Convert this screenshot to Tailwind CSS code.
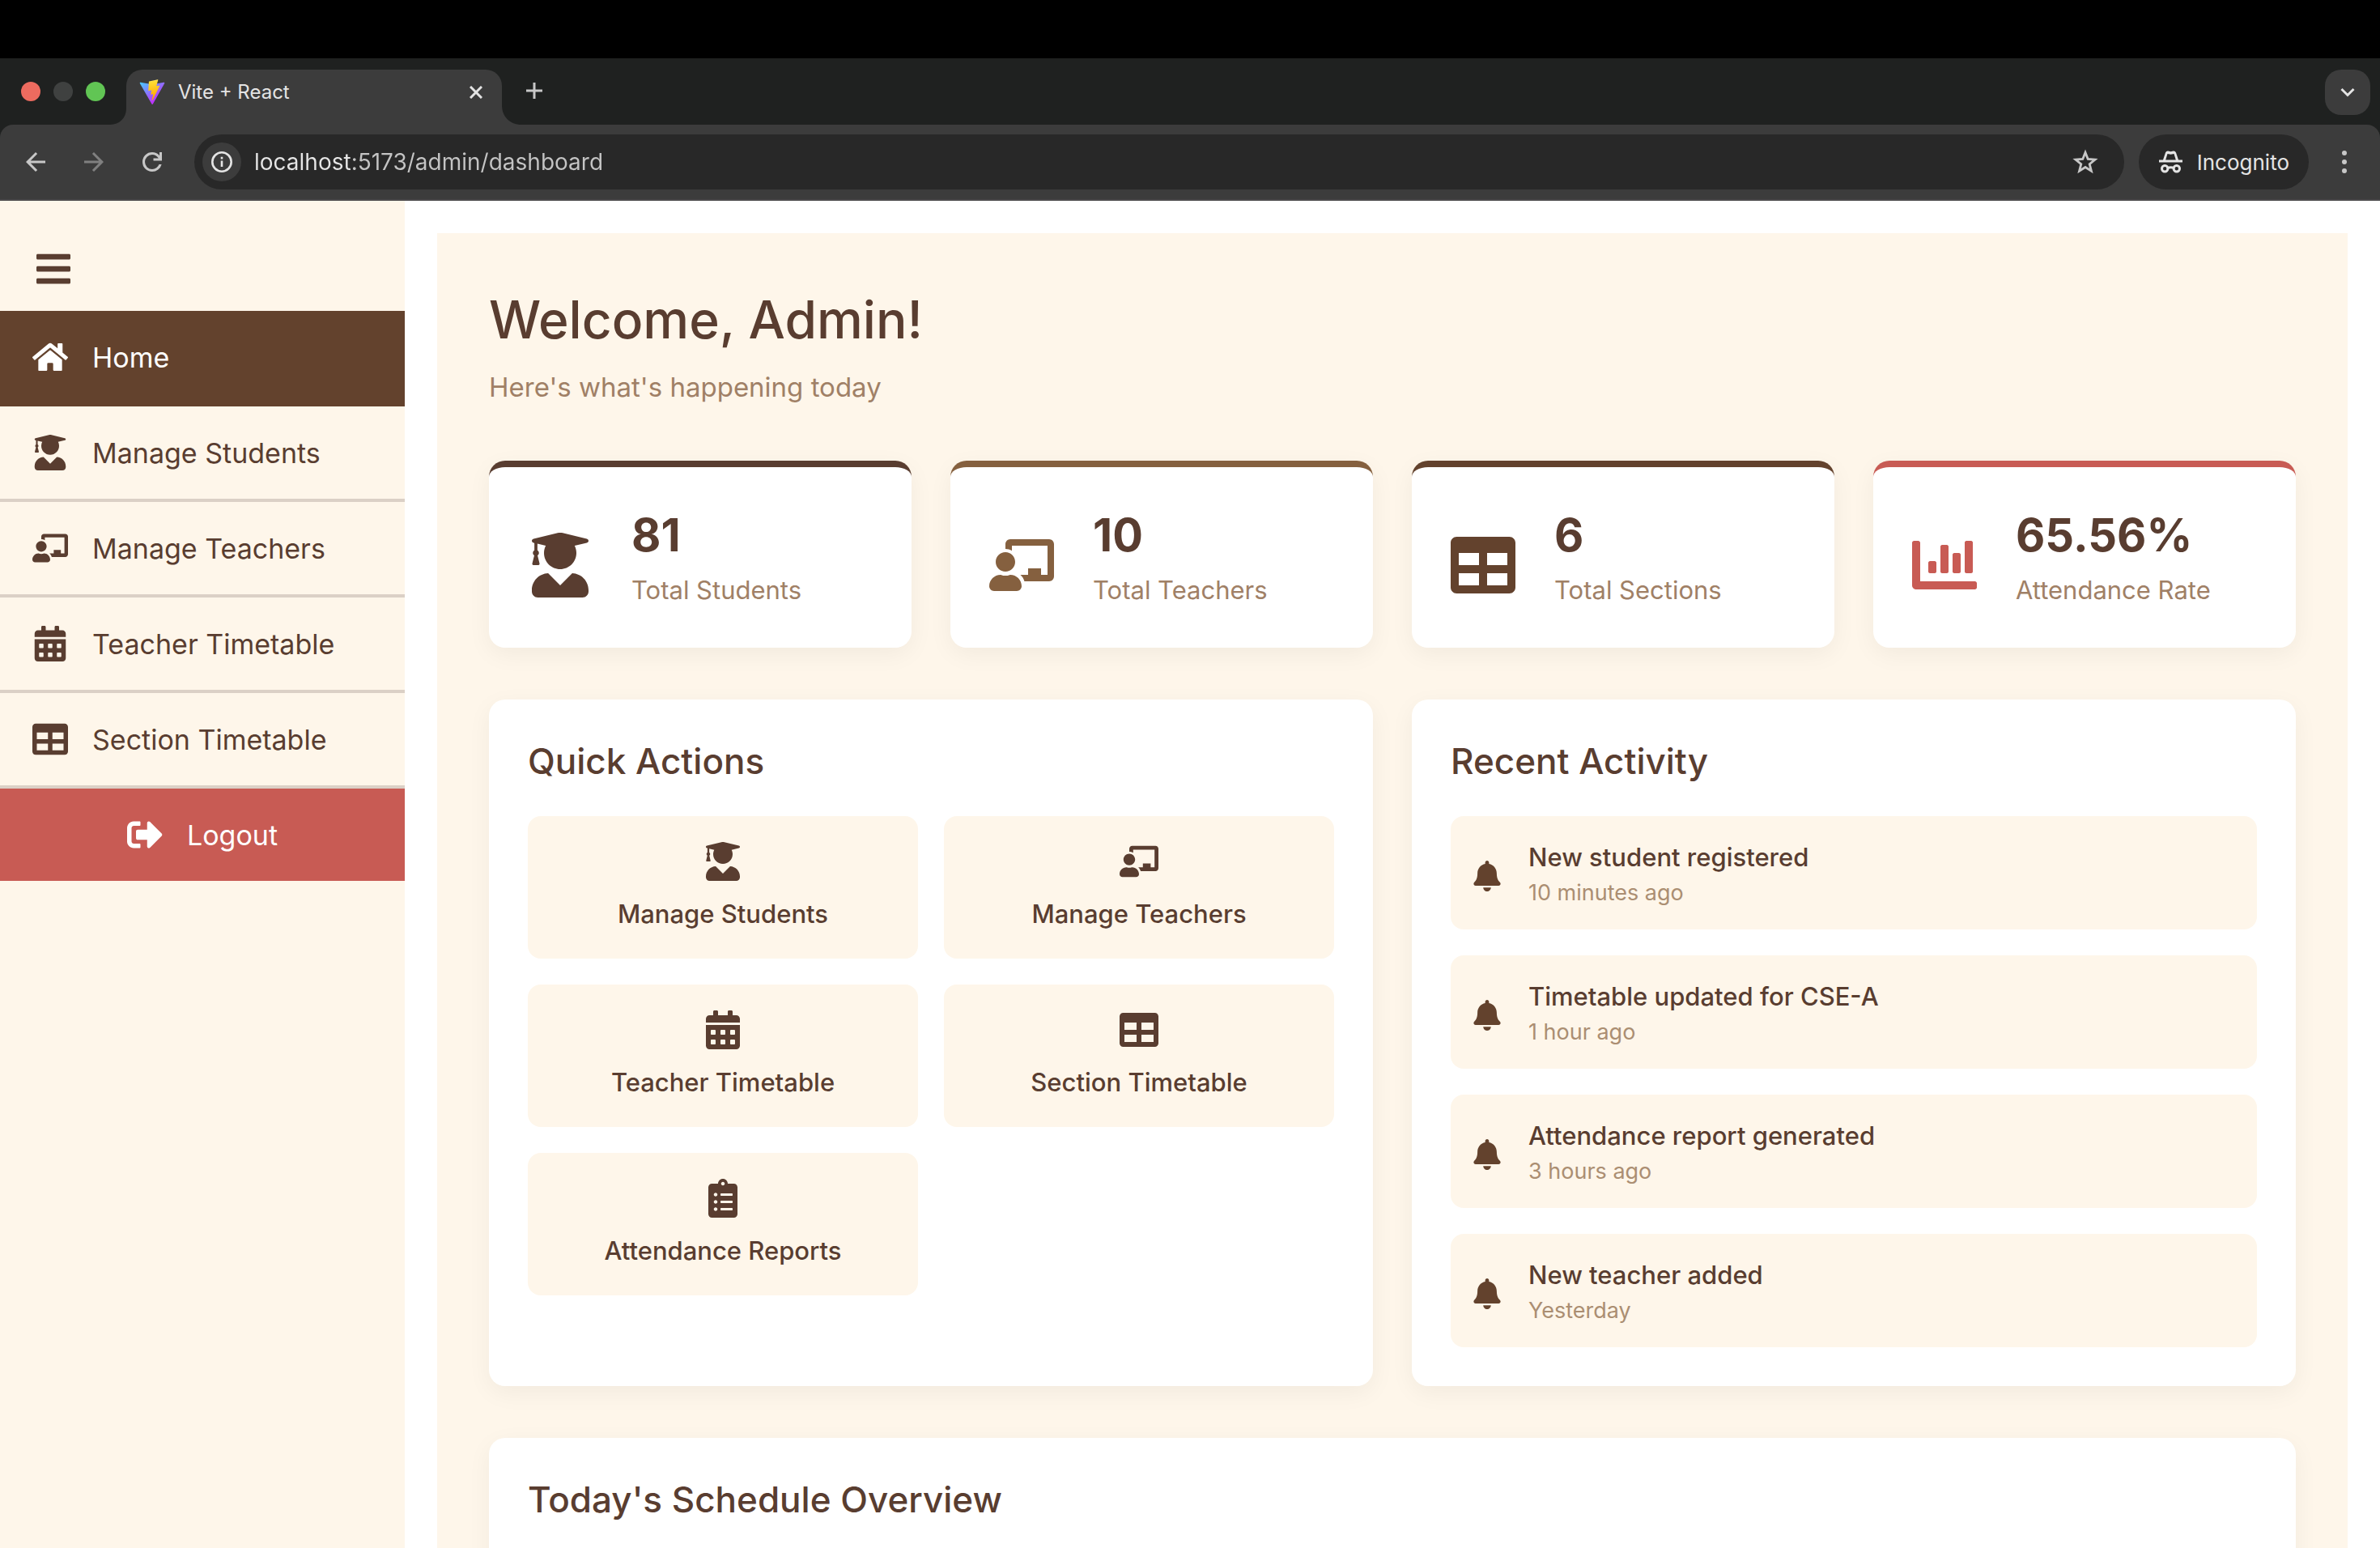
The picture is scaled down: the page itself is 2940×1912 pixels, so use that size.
<!DOCTYPE html>
<html lang="en">
<head>
<meta charset="UTF-8">
<meta name="viewport" content="width=device-width, initial-scale=1.0">
<title>Vite + React</title>
<script src="https://cdn.jsdelivr.net/npm/@tailwindcss/browser@4"></script>
</head>
<body class="flex h-screen flex-col overflow-hidden bg-white font-['Inter',sans-serif] text-[#593d30]">

<!-- Icon sprite -->
<svg class="hidden" aria-hidden="true">
  <symbol id="bars" viewBox="0 0 448 512"><path d="M16 132h416c8.837 0 16-7.163 16-16V76c0-8.837-7.163-16-16-16H16C7.163 60 0 67.163 0 76v40c0 8.837 7.163 16 16 16zm0 160h416c8.837 0 16-7.163 16-16v-40c0-8.837-7.163-16-16-16H16c-8.837 0-16 7.163-16 16v40c0 8.837 7.163 16 16 16zm0 160h416c8.837 0 16-7.163 16-16v-40c0-8.837-7.163-16-16-16H16c-8.837 0-16 7.163-16 16v40c0 8.837 7.163 16 16 16z"/></symbol>
  <symbol id="home" viewBox="0 0 576 512"><path d="M280.37 148.26L96 300.11V464a16 16 0 0 0 16 16l112.06-.29a16 16 0 0 0 15.92-16V368a16 16 0 0 1 16-16h64a16 16 0 0 1 16 16v95.64a16 16 0 0 0 16 16.05L464 480a16 16 0 0 0 16-16V300L295.67 148.26a12.19 12.19 0 0 0-15.3 0zM571.6 251.47L488 182.56V44.05a12 12 0 0 0-12-12h-56a12 12 0 0 0-12 12v72.61L318.47 43a48 48 0 0 0-61 0L4.34 251.47a12 12 0 0 0-1.6 16.9l25.5 31A12 12 0 0 0 45.15 301l235.22-193.74a12.19 12.19 0 0 1 15.3 0L530.9 301a12 12 0 0 0 16.9-1.6l25.5-31a12 12 0 0 0-1.7-16.93z"/></symbol>
  <symbol id="student" viewBox="0 0 448 512"><path d="M319.4 320.6L224 416l-95.4-95.4C57.1 323.7 0 382.2 0 454.4v9.6c0 26.5 21.5 48 48 48h352c26.5 0 48-21.5 48-48v-9.6c0-72.2-57.1-130.7-128.6-133.8zM13.6 79.8l6.4 1.5v58.4c-7 4.2-12 11.5-12 20.3 0 8.4 4.6 15.4 11.1 19.7L3.5 242c-1.7 6.9 2.1 14 7.6 14h41.8c5.5 0 9.3-7.1 7.6-14l-15.6-62.3C51.4 175.4 56 168.4 56 160c0-8.8-5-16.1-12-20.3V87.1l66 15.9c-8.6 17.2-14 36.4-14 57 0 70.7 57.3 128 128 128s128-57.3 128-128c0-20.6-5.3-39.8-14-57l96.3-23.2c18.2-4.4 18.2-27.1 0-31.5l-190.4-46c-13-3.1-26.7-3.1-39.7 0L13.6 48.2c-18.1 4.4-18.1 27.2 0 31.6z"/></symbol>
  <symbol id="teacher" viewBox="0 0 640 512"><path d="M208 352c-2.39 0-4.78.35-7.06 1.09C187.98 357.3 174.35 360 160 360c-14.35 0-27.98-2.7-40.95-6.91-2.28-.74-4.66-1.09-7.05-1.09C49.94 352-.33 402.48 0 464.62.14 490.88 21.73 512 48 512h224c26.27 0 47.86-21.12 48-47.38.33-62.14-49.94-112.62-112-112.62zm-48-32c53.02 0 96-42.98 96-96s-42.98-96-96-96-96 42.98-96 96 42.98 96 96 96zM592 0H208c-26.47 0-48 22.25-48 49.59V96c23.42 0 45.1 6.78 64 17.8V64h352v288h-64v-64H384v64h-76.24c19.1 16.69 33.12 38.73 39.69 64H592c26.47 0 48-22.25 48-49.59V49.59C640 22.25 618.47 0 592 0z"/></symbol>
  <symbol id="calendar" viewBox="0 0 448 512"><path d="M0 464c0 26.500 21.500 48 48 48h352c26.500 0 48-21.500 48-48V192H0v272zm320-196c0-6.600 5.400-12 12-12h40c6.600 0 12 5.400 12 12v40c0 6.600-5.400 12-12 12h-40c-6.600 0-12-5.400-12-12v-40zm0 128c0-6.600 5.400-12 12-12h40c6.600 0 12 5.400 12 12v40c0 6.600-5.400 12-12 12h-40c-6.600 0-12-5.400-12-12v-40zM192 268c0-6.600 5.400-12 12-12h40c6.600 0 12 5.400 12 12v40c0 6.600-5.400 12-12 12h-40c-6.600 0-12-5.400-12-12v-40zm0 128c0-6.600 5.400-12 12-12h40c6.600 0 12 5.400 12 12v40c0 6.600-5.400 12-12 12h-40c-6.600 0-12-5.400-12-12v-40zM64 268c0-6.600 5.400-12 12-12h40c6.600 0 12 5.400 12 12v40c0 6.600-5.400 12-12 12H76c-6.600 0-12-5.400-12-12v-40zm0 128c0-6.600 5.400-12 12-12h40c6.600 0 12 5.400 12 12v40c0 6.600-5.400 12-12 12H76c-6.600 0-12-5.400-12-12v-40zM400 64h-48V16c0-8.800-7.200-16-16-16h-32c-8.800 0-16 7.200-16 16v48H160V16c0-8.800-7.200-16-16-16h-32c-8.800 0-16 7.200-16 16v48H48C21.500 64 0 85.500 0 112v48h448v-48c0-26.500-21.500-48-48-48z"/></symbol>
  <symbol id="table" viewBox="0 0 512 512"><path d="M464 32H48C21.490 32 0 53.490 0 80v352c0 26.510 21.490 48 48 48h416c26.510 0 48-21.490 48-48V80c0-26.510-21.490-48-48-48zM224 416H64v-96h160v96zm0-160H64v-96h160v96zm224 160H288v-96h160v96zm0-160H288v-96h160v96z"/></symbol>
  <symbol id="logout" viewBox="0 0 512 512"><path d="M497 273L329 441c-15 15-41 4.500-41-17v-96H152c-13.300 0-24-10.700-24-24v-96c0-13.300 10.700-24 24-24h136V88c0-21.400 25.900-32 41-17l168 168c9.300 9.400 9.300 24.600 0 34zM192 436v-40c0-6.600-5.400-12-12-12H96c-17.700 0-32-14.300-32-32V160c0-17.700 14.300-32 32-32h84c6.600 0 12-5.400 12-12V76c0-6.600-5.400-12-12-12H96c-53 0-96 43-96 96v192c0 53 43 96 96 96h84c6.600 0 12-5.400 12-12z"/></symbol>
  <symbol id="chart" viewBox="0 0 512 512"><path d="M332.800 320h38.400c6.400 0 12.800-6.400 12.800-12.800V172.800c0-6.400-6.400-12.800-12.800-12.800h-38.400c-6.400 0-12.800 6.400-12.800 12.800v134.400c0 6.400 6.400 12.800 12.800 12.800zm96 0h38.400c6.400 0 12.800-6.400 12.800-12.800V76.800c0-6.400-6.400-12.800-12.800-12.800h-38.400c-6.400 0-12.800 6.400-12.800 12.800v230.400c0 6.400 6.400 12.800 12.800 12.800zm-288 0h38.400c6.400 0 12.800-6.400 12.800-12.800v-70.400c0-6.400-6.400-12.800-12.800-12.800h-38.400c-6.400 0-12.800 6.400-12.800 12.800v70.400c0 6.400 6.400 12.800 12.800 12.800zm96 0h38.400c6.400 0 12.800-6.400 12.800-12.800V108.800c0-6.400-6.400-12.800-12.800-12.800h-38.400c-6.400 0-12.800 6.400-12.800 12.800v198.400c0 6.400 6.400 12.800 12.800 12.800zM496 384H64V80c0-8.840-7.160-16-16-16H16C7.160 64 0 71.160 0 80v336c0 17.670 14.330 32 32 32h464c8.840 0 16-7.160 16-16v-32c0-8.840-7.160-16-16-16z"/></symbol>
  <symbol id="clipboard" viewBox="0 0 384 512"><path d="M336 64h-80c0-35.300-28.700-64-64-64s-64 28.700-64 64H48C21.500 64 0 85.500 0 112v352c0 26.500 21.500 48 48 48h288c26.500 0 48-21.500 48-48V112c0-26.500-21.500-48-48-48zM96 424c-13.300 0-24-10.700-24-24s10.700-24 24-24 24 10.700 24 24-10.700 24-24 24zm0-96c-13.300 0-24-10.700-24-24s10.700-24 24-24 24 10.700 24 24-10.700 24-24 24zm0-96c-13.300 0-24-10.700-24-24s10.700-24 24-24 24 10.700 24 24-10.700 24-24 24zm96-192c13.300 0 24 10.700 24 24s-10.700 24-24 24-24-10.700-24-24 10.700-24 24-24zm128 368c0 4.400-3.600 8-8 8H168c-4.400 0-8-3.600-8-8v-16c0-4.400 3.600-8 8-8h144c4.400 0 8 3.600 8 8v16zm0-96c0 4.400-3.600 8-8 8H168c-4.400 0-8-3.600-8-8v-16c0-4.400 3.600-8 8-8h144c4.400 0 8 3.600 8 8v16zm0-96c0 4.400-3.600 8-8 8H168c-4.400 0-8-3.600-8-8v-16c0-4.400 3.600-8 8-8h144c4.400 0 8 3.600 8 8v16z"/></symbol>
  <symbol id="bell" viewBox="0 0 448 512"><path d="M224 512c35.320 0 63.970-28.650 63.970-64H160.030c0 35.350 28.650 64 63.970 64zm215.390-149.710c-19.320-20.760-55.470-51.990-55.470-154.290 0-77.700-54.480-139.900-127.940-155.160V32c0-17.670-14.320-32-31.980-32s-31.980 14.330-31.980 32v20.840C118.560 68.100 64.080 130.300 64.080 208c0 102.300-36.150 133.530-55.470 154.290-6 6.450-8.660 14.160-8.610 21.710.11 16.400 12.980 32 32.100 32h383.800c19.120 0 32-15.600 32.100-32 .05-7.550-2.610-15.270-8.610-21.710z"/></symbol>
</svg>

<!-- Browser window chrome -->
<header class="shrink-0 border-t-[72px] border-black bg-[#1f2120] text-[#e4e4e4]">
  <div class="flex h-[82px] items-start pt-[14px] pr-3 pl-[26px]">
    <div class="flex h-[54px] items-center gap-4 pr-1.5">
      <button aria-label="Close window" class="size-6 rounded-full bg-[#ed6b5f]"></button>
      <button aria-label="Minimize window" class="size-6 rounded-full bg-[#3f4140]"></button>
      <button aria-label="Zoom window" class="size-6 rounded-full bg-[#61c554]"></button>
    </div>
    <svg class="size-5 self-end fill-[#3c3c3c]" viewBox="0 0 24 24" aria-hidden="true"><path d="M24 0v24H0C14 24 24 14 24 0Z"/></svg>
    <div class="h-full w-[464px] rounded-t-[20px] bg-[#3c3c3c]">
      <div class="flex h-14 items-center gap-4 pr-6 pl-4">
        <svg class="size-8" viewBox="0 0 410 404" fill="none" aria-hidden="true">
          <defs>
            <linearGradient id="va" x1="6" y1="33" x2="235" y2="344" gradientUnits="userSpaceOnUse"><stop stop-color="#41D1FF"/><stop offset="1" stop-color="#BD34FE"/></linearGradient>
            <linearGradient id="vb" x1="194.651" y1="8.818" x2="236.076" y2="292.989" gradientUnits="userSpaceOnUse"><stop stop-color="#FFEA83"/><stop offset=".083" stop-color="#FFDD35"/><stop offset="1" stop-color="#FFA800"/></linearGradient>
          </defs>
          <path fill="url(#va)" d="M399.641 59.5246L215.643 388.545C211.844 395.338 202.084 395.378 198.228 388.618L10.5817 59.5563C6.38087 52.1896 12.6802 43.2665 21.0281 44.7586L205.223 77.6824C206.398 77.8924 207.601 77.8904 208.776 77.6763L389.119 44.8058C397.439 43.2894 403.768 52.1434 399.641 59.5246Z"/>
          <path fill="url(#vb)" d="M292.965 1.5744L156.801 28.2552C154.563 28.6937 152.906 30.5903 152.771 32.8664L144.395 174.33C144.198 177.662 147.258 180.248 150.51 179.498L188.42 170.749C191.967 169.931 195.172 173.055 194.443 176.622L183.18 231.775C182.422 235.487 185.907 238.661 189.532 237.56L212.947 230.446C216.577 229.344 220.065 232.527 219.297 236.242L201.398 322.875C200.278 328.294 207.486 331.249 210.492 326.603L212.5 323.5L323.454 102.072C325.312 98.3645 322.108 94.137 318.036 94.9228L279.014 102.454C275.347 103.161 272.227 99.746 273.262 96.1583L298.731 7.86689C299.767 4.27314 296.636 0.855181 292.965 1.5744Z"/>
        </svg>
        <span class="flex-1 text-2xl">Vite + React</span>
        <button aria-label="Close tab"><svg class="size-4 stroke-[#e4e4e4] stroke-3" viewBox="0 0 16 16" fill="none"><path d="M1 1l14 14M15 1L1 15"/></svg></button>
      </div>
    </div>
    <svg class="size-6 self-end fill-[#3c3c3c]" viewBox="0 0 24 24" aria-hidden="true"><path d="M0 0v24h24C10 24 0 14 0 0Z"/></svg>
    <button aria-label="New tab" class="grid h-13 w-8 place-items-center"><svg class="size-5 stroke-[#c7c7c7] stroke-3" viewBox="0 0 20 20" fill="none"><path d="M10 0v20M0 10h20"/></svg></button>
    <button aria-label="Search tabs" class="ml-auto grid size-14 place-items-center rounded-[20px] bg-[#3c3c3c]"><svg class="size-5 stroke-[#e4e4e4] stroke-3" viewBox="0 0 20 20" fill="none"><path d="M2.500 6l7.500 7.500L17.500 6"/></svg></button>
  </div>

  <div class="flex items-center rounded-t-[16px] border-b-2 border-[#4a484a] bg-[#3c3c3c] py-3 pr-7 pl-[26px]">
    <div class="mr-[34px] flex gap-9">
      <button aria-label="Back"><svg class="size-9 fill-[#c7c7c7]" viewBox="0 -960 960 960"><path d="m313-440 224 224-57 56-320-320 320-320 57 56-224 224h487v80H313Z"/></svg></button>
      <button aria-label="Forward"><svg class="size-9 fill-[#808080]" viewBox="0 -960 960 960"><path d="M647-440H160v-80h487L423-744l57-56 320 320-320 320-57-56 224-224Z"/></svg></button>
      <button aria-label="Reload"><svg class="size-9 fill-[#c7c7c7]" viewBox="0 -960 960 960"><path d="M480-160q-134 0-227-93t-93-227q0-134 93-227t227-93q69 0 132 28.500T720-690v-110h80v280H520v-80h168q-32-56-87.500-88T480-720q-100 0-170 70t-70 170q0 100 70 170t170 70q77 0 139-44t87-116h84q-28 106-114 173t-196 67Z"/></svg></button>
    </div>
    <div class="flex h-[68px] flex-1 items-center gap-4 rounded-full bg-[#282828] pr-8 pl-2.5">
      <button aria-label="View site information" class="grid size-12 place-items-center rounded-full bg-[#3c3c3c]"><svg class="size-7" viewBox="0 0 28 28" fill="none" stroke="#e4e4e4" stroke-width="2.600"><circle cx="14" cy="14" r="11.700"/><path d="M14 12.500v7.500M14 7.700v2.800"/></svg></button>
      <input aria-label="Address" type="text" value="localhost:5173/admin/dashboard" class="h-10 flex-1 bg-[linear-gradient(to_right,#e6e6e6_122px,#c4c4c4_122px)] bg-clip-text text-[28px] text-transparent">
      <button aria-label="Bookmark this tab"><svg class="size-8" viewBox="0 0 32 32" fill="none" stroke="#c7c7c7" stroke-width="2.800"><path d="M16 4.300l3.200 8.200 8.800.6-6.800 5.600 2.200 8.500-7.400-4.700-7.400 4.700 2.200-8.500-6.800-5.600 8.800-.6z"/></svg></button>
    </div>
    <button class="ml-[18px] flex h-[68px] items-center gap-[18px] rounded-full bg-[#282828] pr-6 pl-[25px] text-[26px]">
      <svg class="h-7 w-[29px]" viewBox="0 0 29 28" aria-hidden="true"><path fill="#e4e4e4" fill-rule="evenodd" d="M5 11.500L8 2.500Q9 .2 11.300.5l3.200.8 3.200-.8Q20 .2 21 2.500l3 9h5v3H0v-3zM8.200 11.500h12.600l-2.300-7.600-4 .9-4-.9z"/><circle cx="7.200" cy="22.300" r="3.700" fill="none" stroke="#e4e4e4" stroke-width="3"/><circle cx="21.800" cy="22.300" r="3.700" fill="none" stroke="#e4e4e4" stroke-width="3"/><path d="M10.500 21.500q4-1.500 8 0" fill="none" stroke="#e4e4e4" stroke-width="3"/></svg>
      Incognito
    </button>
    <button aria-label="Browser menu" class="ml-7"><svg class="size-8 fill-[#c7c7c7]" viewBox="0 0 32 32"><circle cx="16" cy="5" r="3"/><circle cx="16" cy="16" r="3"/><circle cx="16" cy="27" r="3"/></svg></button>
  </div>
</header>

<div class="flex min-h-0 flex-1">
  <!-- Sidebar -->
  <aside class="w-[500px] shrink-0 bg-[#fef6ea] text-[34px]">
    <button aria-label="Toggle sidebar" class="flex h-[136px] items-center pt-8 pl-[42px]"><svg class="size-12 fill-current"><use href="#bars"/></svg></button>
    <nav>
      <a href="#" class="flex h-[118px] items-center gap-[30px] border-b-4 border-[#63422d] bg-[#63422d] px-10 text-white"><svg class="size-11 fill-current"><use href="#home"/></svg>Home</a>
      <a href="#" class="flex h-[118px] items-center gap-[30px] border-b-4 border-[#dbd0c6] px-10"><svg class="size-11 fill-current"><use href="#student"/></svg>Manage Students</a>
      <a href="#" class="flex h-[118px] items-center gap-[30px] border-b-4 border-[#dbd0c6] px-10"><svg class="size-11 fill-current"><use href="#teacher"/></svg>Manage Teachers</a>
      <a href="#" class="flex h-[118px] items-center gap-[30px] border-b-4 border-[#dbd0c6] px-10"><svg class="size-11 fill-current"><use href="#calendar"/></svg>Teacher Timetable</a>
      <a href="#" class="flex h-[118px] items-center gap-[30px] border-b-4 border-[#dbd0c6] px-10"><svg class="size-11 fill-current"><use href="#table"/></svg>Section Timetable</a>
    </nav>
    <button class="flex h-[114px] w-full items-center justify-center gap-[30px] bg-[#c85b54] text-white"><svg class="size-11 fill-current"><use href="#logout"/></svg>Logout</button>
  </aside>

  <!-- Dashboard -->
  <main class="min-w-0 flex-1 overflow-hidden p-10">
    <div class="bg-[#fef6ea] p-16">
      <h1 class="text-[64px] leading-[86px] font-medium">Welcome, Admin!</h1>
      <p class="mt-[14px] text-[33px] leading-[52px] text-[#a08066]">Here's what's happening today</p>

      <section class="mt-[65px] grid grid-cols-4 gap-12" aria-label="Statistics">
        <div class="flex items-center gap-12 rounded-[20px] border-t-8 border-[#593d30] bg-white px-12 pt-12 pb-[47px] shadow-[0_8px_30px_rgba(0,0,0,0.05)]">
          <div class="pt-[18px]"><svg class="size-20 fill-[#593d30]"><use href="#student"/></svg></div>
          <div><p class="text-[56px] leading-[72px] font-bold">81</p><p class="mt-2 text-[31px] leading-[48px] text-[#a08066]">Total Students</p></div>
        </div>
        <div class="flex items-center gap-12 rounded-[20px] border-t-8 border-[#85603f] bg-white px-12 pt-12 pb-[47px] shadow-[0_8px_30px_rgba(0,0,0,0.05)]">
          <div class="pt-[18px]"><svg class="size-20 fill-[#85603f]"><use href="#teacher"/></svg></div>
          <div><p class="text-[56px] leading-[72px] font-bold">10</p><p class="mt-2 text-[31px] leading-[48px] text-[#a08066]">Total Teachers</p></div>
        </div>
        <div class="flex items-center gap-12 rounded-[20px] border-t-8 border-[#63422d] bg-white px-12 pt-12 pb-[47px] shadow-[0_8px_30px_rgba(0,0,0,0.05)]">
          <div class="pt-[18px]"><svg class="size-20 fill-[#63422d]"><use href="#table"/></svg></div>
          <div><p class="text-[56px] leading-[72px] font-bold">6</p><p class="mt-2 text-[31px] leading-[48px] text-[#a08066]">Total Sections</p></div>
        </div>
        <div class="flex items-center gap-12 rounded-[20px] border-t-8 border-[#c85b54] bg-white px-12 pt-12 pb-[47px] shadow-[0_8px_30px_rgba(0,0,0,0.05)]">
          <div class="pt-[18px]"><svg class="size-20 fill-[#c85b54]"><use href="#chart"/></svg></div>
          <div><p class="text-[56px] leading-[72px] font-bold">65.56%</p><p class="mt-2 text-[31px] leading-[48px] text-[#a08066]">Attendance Rate</p></div>
        </div>
      </section>

      <div class="mt-16 grid grid-cols-2 gap-12">
        <section class="rounded-[20px] bg-white p-12 shadow-[0_8px_30px_rgba(0,0,0,0.05)]">
          <h2 class="mb-10 text-[44px] leading-14 font-medium">Quick Actions</h2>
          <div class="grid grid-cols-2 gap-8 text-[31px] leading-[48px] font-medium">
            <button class="flex flex-col items-center gap-[17px] rounded-2xl bg-[#fef6ea] pt-8 pb-[31px]"><svg class="size-12 fill-current"><use href="#student"/></svg>Manage Students</button>
            <button class="flex flex-col items-center gap-[17px] rounded-2xl bg-[#fef6ea] pt-8 pb-[31px]"><svg class="size-12 fill-current"><use href="#teacher"/></svg>Manage Teachers</button>
            <button class="flex flex-col items-center gap-[17px] rounded-2xl bg-[#fef6ea] pt-8 pb-[31px]"><svg class="size-12 fill-current"><use href="#calendar"/></svg>Teacher Timetable</button>
            <button class="flex flex-col items-center gap-[17px] rounded-2xl bg-[#fef6ea] pt-8 pb-[31px]"><svg class="size-12 fill-current"><use href="#table"/></svg>Section Timetable</button>
            <button class="flex flex-col items-center gap-[17px] rounded-2xl bg-[#fef6ea] pt-8 pb-[31px]"><svg class="size-12 fill-current"><use href="#clipboard"/></svg>Attendance Reports</button>
          </div>
        </section>

        <section class="rounded-[20px] bg-white p-12 shadow-[0_8px_30px_rgba(0,0,0,0.05)]">
          <h2 class="mb-10 text-[44px] leading-14 font-medium">Recent Activity</h2>
          <ul class="flex flex-col gap-8">
            <li class="flex items-center gap-8 rounded-2xl bg-[#fef6ea] px-[26px] pt-[27px] pb-[25px]"><div class="pt-1.5"><svg class="size-[38px] fill-[#63422d]"><use href="#bell"/></svg></div><div><p class="text-[31px] leading-[48px] font-medium">New student registered</p><p class="text-[27px] leading-10 text-[#ab8e72]">10 minutes ago</p></div></li>
            <li class="flex items-center gap-8 rounded-2xl bg-[#fef6ea] px-[26px] pt-[27px] pb-[25px]"><div class="pt-1.5"><svg class="size-[38px] fill-[#63422d]"><use href="#bell"/></svg></div><div><p class="text-[31px] leading-[48px] font-medium">Timetable updated for CSE-A</p><p class="text-[27px] leading-10 text-[#ab8e72]">1 hour ago</p></div></li>
            <li class="flex items-center gap-8 rounded-2xl bg-[#fef6ea] px-[26px] pt-[27px] pb-[25px]"><div class="pt-1.5"><svg class="size-[38px] fill-[#63422d]"><use href="#bell"/></svg></div><div><p class="text-[31px] leading-[48px] font-medium">Attendance report generated</p><p class="text-[27px] leading-10 text-[#ab8e72]">3 hours ago</p></div></li>
            <li class="flex items-center gap-8 rounded-2xl bg-[#fef6ea] px-[26px] pt-[27px] pb-[25px]"><div class="pt-1.5"><svg class="size-[38px] fill-[#63422d]"><use href="#bell"/></svg></div><div><p class="text-[31px] leading-[48px] font-medium">New teacher added</p><p class="text-[27px] leading-10 text-[#ab8e72]">Yesterday</p></div></li>
          </ul>
        </section>
      </div>

      <section class="mt-16 rounded-[20px] bg-white p-12 shadow-[0_8px_30px_rgba(0,0,0,0.05)]">
        <h2 class="mb-10 text-[44px] leading-14 font-medium">Today's Schedule Overview</h2>
      </section>
    </div>
  </main>
</div>
</body>
</html>
